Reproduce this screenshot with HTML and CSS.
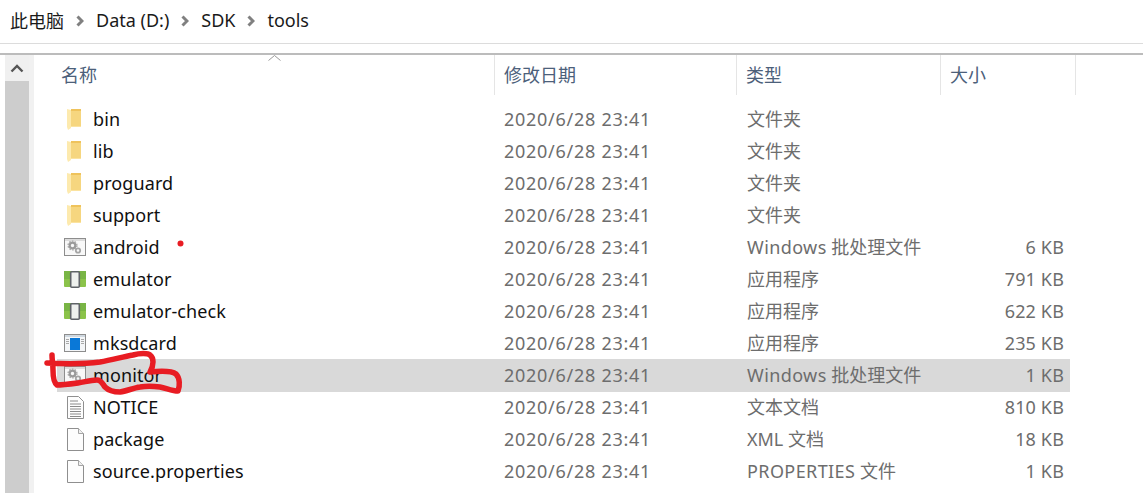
FILE: index.html
```html
<!DOCTYPE html>
<html lang="zh">
<head>
<meta charset="utf-8">
<title>tools</title>
<link rel="stylesheet" href="styles.css">
</head>
<body>
<svg width="0" height="0" class="defs">
  <defs>
    <symbol id="i-chev" viewBox="0 0 8 12">
      <path d="M1.500 1.500L6 6l-4.500 4.500" fill="none" stroke="#808080" stroke-width="3"/>
    </symbol>
    <symbol id="i-folder" viewBox="0 0 14 22">
      <path d="M4 1h10v17H4z" fill="#f6d67f"/>
      <path d="M4 1h10v2H4z" fill="#efc35c"/>
      <path d="M0 1l4 1v18l-3 2-1-3z" fill="#fdeaae"/>
      <path d="M4 18h10v1H4z" fill="#fbe3a0"/>
    </symbol>
    <symbol id="i-bat" viewBox="0 0 22 18">
      <rect x=".5" y=".5" width="21" height="17" fill="#f8f8f8" stroke="#8d8d8d"/>
      <rect x="1" y="1" width="20" height="2" fill="#dcdcdc"/>
      <circle cx="8.500" cy="7.500" r="2.800" fill="none" stroke="#9a9a9a" stroke-width="2.200"/>
      <circle cx="8.500" cy="7.500" r="4.400" fill="none" stroke="#a8a8a8" stroke-width="1.400" stroke-dasharray="1.500 1.300"/>
      <circle cx="14" cy="12.500" r="2.200" fill="none" stroke="#a5a5a5" stroke-width="1.800"/>
    </symbol>
    <symbol id="i-emu" viewBox="0 0 22 17">
      <rect y="0" width="22" height="16" fill="#8bc34a" rx="1"/>
      <rect y="0" width="22" height="8" fill="#79b545"/>
      <rect x="6.700" y=".8" width="8.600" height="15.400" rx="1" fill="#eef1ee" stroke="#5f6368" stroke-width="1.600"/>
    </symbol>
    <symbol id="i-app" viewBox="0 0 22 18">
      <rect x=".5" y=".5" width="21" height="17" fill="#f4f6f8" stroke="#8d8d8d"/>
      <rect x="1" y="1" width="20" height="2" fill="#cfd8e0"/>
      <rect x="6" y="4" width="10" height="12" fill="#0a78d7"/>
      <path d="M2 5.500h3M2 7.500h3M2 9.500h3M17 5.500h3M17 7.500h3M17 9.500h3" stroke="#a9a9a9"/>
    </symbol>
    <symbol id="i-txt" viewBox="0 0 17 23">
      <path d="M.5.500h11l5 5v17H.5z" fill="#fdfdfd" stroke="#8f8f8f"/>
      <path d="M3 5h8M3 8h11M3 10.500h11M3 13h11M3 15.500h11M3 18h11M3 20.500h11" stroke="#8a8a8a"/>
    </symbol>
    <symbol id="i-file" viewBox="0 0 17 23">
      <path d="M.5.500h11l5 5v17H.5z" fill="#fdfdfd" stroke="#8f8f8f"/>
      <path d="M11.500.500v5h5" fill="#f0f0f0" stroke="#a5a5a5"/>
    </symbol>
  </defs>
</svg>

<nav class="crumbs">
  <span>此电脑</span><svg class="sep"><use href="#i-chev"/></svg>
  <span>Data (D:)</span><svg class="sep"><use href="#i-chev"/></svg>
  <span>SDK</span><svg class="sep"><use href="#i-chev"/></svg>
  <span>tools</span>
</nav>

<div class="pane">
  <aside class="scroll">
    <div class="scroll-up"><svg width="14" height="9" viewBox="0 0 14 9"><path d="M1.500 7.500L7 2l5.500 5.500" fill="none" stroke="#555" stroke-width="2.400"/></svg></div>
  </aside>
  <main class="list">
    <div class="head">
      <div class="hcell hname">名称<svg class="sort" width="13" height="6" viewBox="0 0 13 6"><path d="M.5 5.500l6-5 6 5" fill="none" stroke="#9a9a9a"/></svg></div>
      <div class="hcell">修改日期</div>
      <div class="hcell">类型</div>
      <div class="hcell">大小</div>
    </div>
    <div class="rows">
      <div class="row"><div class="name"><span class="ic"><svg class="folder"><use href="#i-folder"/></svg></span>bin</div><div class="date">2020/6/28 23:41</div><div class="cell">文件夹</div><div class="size"></div></div>
      <div class="row"><div class="name"><span class="ic"><svg class="folder"><use href="#i-folder"/></svg></span>lib</div><div class="date">2020/6/28 23:41</div><div class="cell">文件夹</div><div class="size"></div></div>
      <div class="row"><div class="name"><span class="ic"><svg class="folder"><use href="#i-folder"/></svg></span>proguard</div><div class="date">2020/6/28 23:41</div><div class="cell">文件夹</div><div class="size"></div></div>
      <div class="row"><div class="name"><span class="ic"><svg class="folder"><use href="#i-folder"/></svg></span>support</div><div class="date">2020/6/28 23:41</div><div class="cell">文件夹</div><div class="size"></div></div>
      <div class="row"><div class="name"><span class="ic"><svg class="wide"><use href="#i-bat"/></svg></span>android</div><div class="date">2020/6/28 23:41</div><div class="cell"><span class="latin">Windows</span> 批处理文件</div><div class="size">6 KB</div></div>
      <div class="row"><div class="name"><span class="ic"><svg class="emu"><use href="#i-emu"/></svg></span>emulator</div><div class="date">2020/6/28 23:41</div><div class="cell">应用程序</div><div class="size">791 KB</div></div>
      <div class="row"><div class="name"><span class="ic"><svg class="emu"><use href="#i-emu"/></svg></span>emulator-check</div><div class="date">2020/6/28 23:41</div><div class="cell">应用程序</div><div class="size">622 KB</div></div>
      <div class="row"><div class="name"><span class="ic"><svg class="wide"><use href="#i-app"/></svg></span>mksdcard</div><div class="date">2020/6/28 23:41</div><div class="cell">应用程序</div><div class="size">235 KB</div></div>
      <div class="row selected"><div class="name"><span class="ic"><svg class="wide"><use href="#i-bat"/></svg></span>monitor</div><div class="date">2020/6/28 23:41</div><div class="cell"><span class="latin">Windows</span> 批处理文件</div><div class="size">1 KB</div></div>
      <div class="row"><div class="name"><span class="ic"><svg class="doc"><use href="#i-txt"/></svg></span>NOTICE</div><div class="date">2020/6/28 23:41</div><div class="cell">文本文档</div><div class="size">810 KB</div></div>
      <div class="row"><div class="name"><span class="ic"><svg class="doc"><use href="#i-file"/></svg></span>package</div><div class="date">2020/6/28 23:41</div><div class="cell">XML 文档</div><div class="size">18 KB</div></div>
      <div class="row"><div class="name"><span class="ic"><svg class="doc"><use href="#i-file"/></svg></span>source.properties</div><div class="date">2020/6/28 23:41</div><div class="cell"><span class="latin">PROPERTIES</span> 文件</div><div class="size">1 KB</div></div>
    </div>
  </main>
</div>

<svg class="ink" width="1143" height="493" viewBox="0 0 1143 493">
  <circle cx="180.500" cy="243.500" r="3" fill="#e81c23"/>
  <path d="M47 363C65 364 85 364 100 362C112 360 122 357 133 355C140 353 148 353 150 355C154 358 154 365 150 372C160 371 172 371 176 374C180 378 180 386 178 391C172 391 166 388 160 387C152 386 146 386 140 387C133 388 127 391 120 392C113 392 108 390 105 387C102 383 101 380 97 380C90 380 85 382 78 383C70 384 62 385 57 385C53 382 53 375 53 370C53 364 52 360 52 355" fill="none" stroke="#e81c23" stroke-width="5.500" stroke-linecap="round" stroke-linejoin="round"/>
</svg>
</body>
</html>
```
FILE: styles.css
```css
* { box-sizing: border-box; }
html, body { margin: 0; height: 100%; overflow: hidden; background: #fff; }
body {
  width: 1143px;
  height: 493px;
  position: relative;
  font-family: "Noto Sans", "Noto Sans CJK SC", sans-serif;
  font-size: 18px;
}
.defs { position: absolute; }
.crumbs {
  height: 44px;
  display: flex;
  align-items: center;
  padding: 0 0 3px 10px;
  border-bottom: 1px solid #dcdcdc;
  color: #1a1a1a;
  font-size: 18px;
}
.sep {
  width: 8px;
  height: 12px;
  margin: 2px 12px 0 12px;
  flex: none;
}
.pane {
  margin-top: 9px;
  height: 440px;
  border-top: 2px solid #bcbcbc;
  display: flex;
  padding-left: 5px;
}
.scroll {
  width: 24px;
  background: #cdcdcd;
  flex: none;
}
.scroll-up {
  height: 26px;
  background: #f0f0f0;
  display: flex;
  align-items: center;
  justify-content: center;
}
.list {
  flex: 1;
  border-left: 5px solid #f1f1f1;
  padding-left: 23px;
  position: relative;
}
.head {
  display: grid;
  grid-template-columns: 438px 242px 204px 135px;
  height: 40px;
  color: #4c607a;
  font-size: 18px;
  position: relative;
}
.hcell {
  border-right: 1px solid #e5e5e5;
  padding: 7px 0 0 9px;
  line-height: 26px;
}
.hname { padding-left: 4px; position: relative; }
.sort { position: absolute; left: 211px; top: 0; }
.rows { padding-top: 8px; width: 1013px; }
.row {
  display: grid;
  grid-template-columns: 437px 243px 204px 129px;
  height: 32px;
  align-items: start;
  color: #6d6d6d;
  line-height: 32px;
  white-space: nowrap;
}
.row.selected { background: #d9d9d9; height: 33px; margin-bottom: -1px; }
.name {
  display: flex;
  align-items: center;
  color: #101010;
  letter-spacing: .1px;
}
.ic {
  width: 36px;
  display: flex;
  justify-content: center;
  flex: none;
}
.cell, .date { padding-left: 10px; }
.date { letter-spacing: .73px; }
.latin { letter-spacing: .4px; }
.size { text-align: right; padding-right: 6px; letter-spacing: .15px; }
.folder { width: 14px; height: 22px; margin-right: 2px; }
.wide { width: 22px; height: 18px; }
.emu { width: 22px; height: 17px; }
.doc { width: 17px; height: 23px; }
.ink { position: absolute; left: 0; top: 0; pointer-events: none; }
```
